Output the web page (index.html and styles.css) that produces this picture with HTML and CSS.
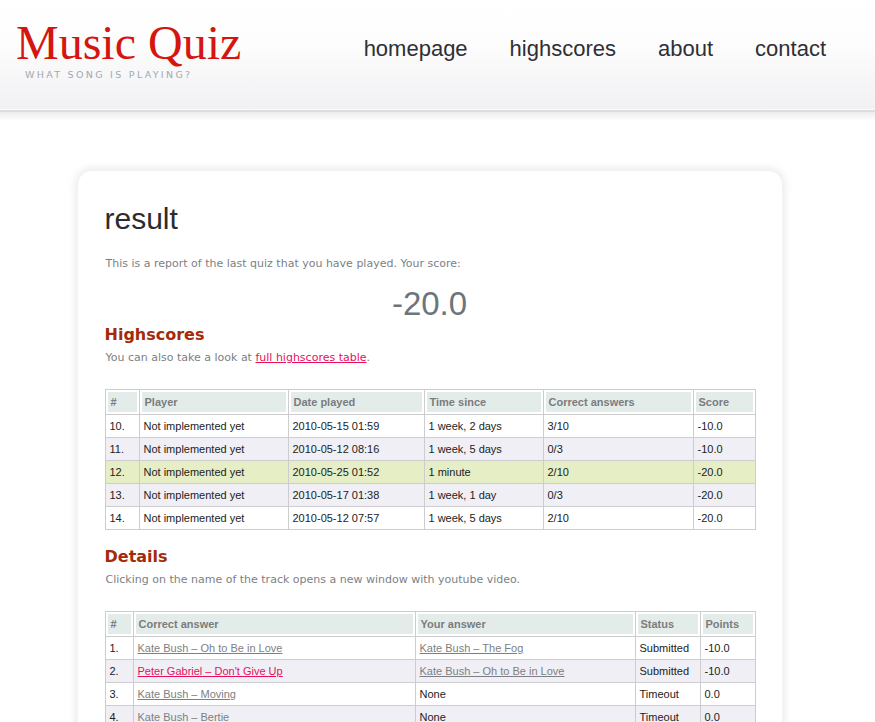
FILE: index.html
```html
<!DOCTYPE html>
<html>
<head>
<meta charset="utf-8">
<title>Music Quiz - result</title>
<link rel="stylesheet" href="styles.css">
</head>
<body>
<header class="top">
  <div class="brand">
    <div class="logo">Music Quiz</div>
    <div class="tagline">WHAT SONG IS PLAYING?</div>
  </div>
  <nav class="menu">
    <a href="#">homepage</a>
    <a href="#">highscores</a>
    <a href="#">about</a>
    <a href="#">contact</a>
  </nav>
</header>
<div class="shadowline"></div>
<main class="wrap">
  <section class="card">
    <h1 class="title">result</h1>
    <p class="text intro">This is a report of the last quiz that you have played. Your score:</p>
    <div class="score">-20.0</div>
    <h2 class="sub">Highscores</h2>
    <p class="text">You can also take a look at <a class="hot" href="#">full highscores table</a>.</p>
    <table class="grid hs">
      <colgroup><col class="c1"><col class="c2"><col class="c3"><col class="c4"><col class="c5"><col class="c6"></colgroup>
      <thead><tr><th>#</th><th>Player</th><th>Date played</th><th>Time since</th><th>Correct answers</th><th>Score</th></tr></thead>
      <tbody>
        <tr><td>10.</td><td>Not implemented yet</td><td>2010-05-15 01:59</td><td>1 week, 2 days</td><td>3/10</td><td>-10.0</td></tr>
        <tr class="alt"><td>11.</td><td>Not implemented yet</td><td>2010-05-12 08:16</td><td>1 week, 5 days</td><td>0/3</td><td>-10.0</td></tr>
        <tr class="me"><td>12.</td><td>Not implemented yet</td><td>2010-05-25 01:52</td><td>1 minute</td><td>2/10</td><td>-20.0</td></tr>
        <tr class="alt"><td>13.</td><td>Not implemented yet</td><td>2010-05-17 01:38</td><td>1 week, 1 day</td><td>0/3</td><td>-20.0</td></tr>
        <tr><td>14.</td><td>Not implemented yet</td><td>2010-05-12 07:57</td><td>1 week, 5 days</td><td>2/10</td><td>-20.0</td></tr>
      </tbody>
    </table>
    <h2 class="sub">Details</h2>
    <p class="text">Clicking on the name of the track opens a new window with youtube video.</p>
    <table class="grid det">
      <colgroup><col class="d1"><col class="d2"><col class="d3"><col class="d4"><col class="d5"></colgroup>
      <thead><tr><th>#</th><th>Correct answer</th><th>Your answer</th><th>Status</th><th>Points</th></tr></thead>
      <tbody>
        <tr><td>1.</td><td><a class="trk" href="#">Kate Bush – Oh to Be in Love</a></td><td><a class="trk" href="#">Kate Bush – The Fog</a></td><td>Submitted</td><td>-10.0</td></tr>
        <tr class="alt"><td>2.</td><td><a class="hot" href="#">Peter Gabriel – Don't Give Up</a></td><td><a class="trk" href="#">Kate Bush – Oh to Be in Love</a></td><td>Submitted</td><td>-10.0</td></tr>
        <tr><td>3.</td><td><a class="trk" href="#">Kate Bush – Moving</a></td><td>None</td><td>Timeout</td><td>0.0</td></tr>
        <tr class="alt"><td>4.</td><td><span class="plain">Kate Bush – Bertie</span></td><td>None</td><td>Timeout</td><td>0.0</td></tr>
      </tbody>
    </table>
  </section>
</main>
</body>
</html>
```

FILE: styles.css
```css
html, body {
  margin: 0;
  padding: 0;
  background: #ffffff;
}
body {
  font-family: "DejaVu Sans", Verdana, sans-serif;
  overflow: hidden;
}
.top {
  height: 110px;
  box-sizing: border-box;
  background: linear-gradient(to bottom, #ffffff 0%, #fdfdfd 40%, #f1f1f4 100%);
  border-bottom: 1px solid #fbfbfc;
  display: flex;
  justify-content: space-between;
  align-items: flex-start;
  padding: 0 49px 0 16px;
}
.shadowline {
  height: 9px;
  border-top: 2px solid #dcdcdf;
  background: linear-gradient(to bottom, #ececef, #ffffff);
}
.brand {
  padding-top: 16px;
}
.logo {
  font-family: "Liberation Serif", "Times New Roman", serif;
  font-size: 48px;
  line-height: 54px;
  color: #d5150f;
}
.tagline {
  font-family: "DejaVu Sans", Verdana, sans-serif;
  font-size: 9.5px;
  letter-spacing: 2.3px;
  color: #a0a8b1;
  margin: -1px 0 0 9px;
}
.menu {
  display: flex;
  gap: 42px;
  padding-top: 36px;
}
.menu a {
  font-family: "Liberation Sans", Arial, sans-serif;
  font-size: 22px;
  color: #2f2f35;
  text-decoration: none;
}
.wrap {
  width: 720px;
  margin: 0 auto;
  padding-top: 50px;
}
.card {
  width: 704px;
  box-sizing: border-box;
  background: #fff;
  border-radius: 14px 14px 0 0;
  box-shadow: 0 0 6px 4px rgba(225, 225, 232, 0.55);
  padding: 30px 27px 40px 27px;
  min-height: 600px;
}
.title {
  font-family: "Liberation Sans", Arial, sans-serif;
  font-weight: normal;
  font-size: 30px;
  color: #2b2b30;
  margin: 0;
  line-height: 36px;
}
.text {
  font-size: 11px;
  color: #7c7f84;
  margin: 22px 0 0 1px;
  line-height: 14px;
}
.text.intro {
  margin-top: 20px;
}
.score {
  font-family: "Liberation Sans", Arial, sans-serif;
  font-size: 33px;
  color: #6b757d;
  text-align: center;
  line-height: 36px;
  margin-top: 15px;
}
.sub {
  font-family: "DejaVu Sans", Verdana, sans-serif;
  font-size: 16px;
  font-weight: bold;
  color: #a52a08;
  margin: 2px 0 0 0;
  line-height: 22px;
}
.sub + .text {
  margin-top: 5px;
}
a.hot {
  color: #e8105c;
  text-decoration: underline;
}
a.trk {
  color: #7d7f82;
  text-decoration: underline;
}
.plain {
  color: #7d7f82;
}
.grid {
  width: 650px;
  border-collapse: collapse;
  font-family: "Liberation Sans", Arial, sans-serif;
  font-size: 11px;
  color: #222;
  margin-top: 24px;
  margin-bottom: 16px;
  table-layout: fixed;
}
.grid th, .grid td {
  border: 1px solid #cdcdcf;
  text-align: left;
  padding: 0 4px;
}
.grid th {
  height: 24px;
  background: #e4ecea;
  color: #7a7c7e;
  font-weight: bold;
  box-shadow: inset 0 0 0 2px #ffffff;
  padding-left: 5px;
}
.grid td {
  height: 22px;
}
.grid tr.alt td {
  background: #efeff5;
}
.grid tr.me td {
  background: #e5eec4;
}
.det {
  margin-top: 24px;
}
.c1 { width: 34px; }
.c2 { width: 149px; }
.c3 { width: 136px; }
.c4 { width: 119px; }
.c5 { width: 150px; }
.c6 { width: 62px; }
.d1 { width: 28px; }
.d2 { width: 282px; }
.d3 { width: 220px; }
.d4 { width: 65px; }
.d5 { width: 55px; }
```
